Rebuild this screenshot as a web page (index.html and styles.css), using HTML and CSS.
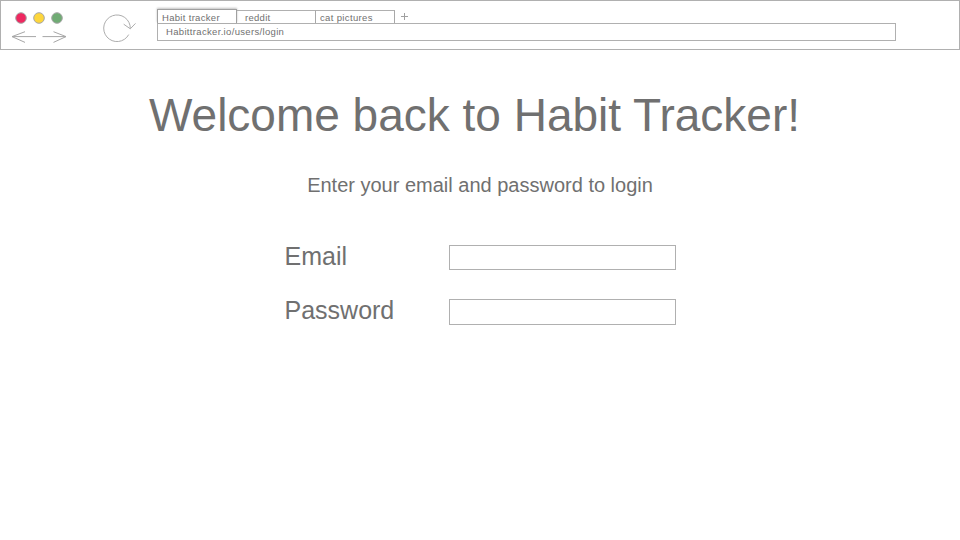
FILE: index.html
```html
<!DOCTYPE html>
<html lang="en">
<head>
<meta charset="utf-8">
<title>Habit tracker</title>
<link rel="stylesheet" href="styles.css">
</head>
<body>
<header class="browser">
  <svg class="controls" width="156" height="48" viewBox="1 1 156 48" fill="none" stroke="#a6a6a6" stroke-width="1">
    <circle cx="21" cy="18" r="5.3" fill="#ee2860"/>
    <circle cx="39" cy="18" r="5.3" fill="#fdd63c"/>
    <circle cx="57" cy="18" r="5.3" fill="#70ab74"/>
    <path d="M36 36.6H12M25 31.7L12 36.6L25 42.4M42.5 36.6H66M53.5 31.7L66 36.6L53.5 42.4"/>
    <path d="M130.3 28.6A13.3 13.3 0 1 0 128.7 34.6M123.7 24.2L130.3 28.8L135.5 23.4" stroke="#adadad"/>
  </svg>
  <div class="main">
    <nav class="tabs">
      <span class="tab active"><span class="t1">Habit tracker</span></span>
      <span class="tab"><span class="t2">reddit</span></span>
      <span class="tab last"><span class="t3">cat pictures</span></span>
      <svg class="plus" width="7" height="7" viewBox="0 0 7 7" stroke="#a0a0a0"><path d="M0 3.5H7M3.5 0V7"/></svg>
    </nav>
    <div class="address"><span class="url">Habittracker.io/users/login</span></div>
  </div>
</header>
<main class="page">
  <h1 class="title">Welcome back to Habit Tracker!</h1>
  <p class="subtitle">Enter your email and password to login</p>
  <form class="form">
    <label class="label email" for="email">Email</label>
    <input class="field" id="email" type="email">
    <label class="label password" for="password">Password</label>
    <input class="field tall" id="password" type="password">
  </form>
</main>
</body>
</html>
```
FILE: styles.css
```css
* { box-sizing: border-box; }
body {
  margin: 0;
  background: #fff;
  color: #707070;
  font-family: "Liberation Sans", Arial, sans-serif;
}
.browser {
  display: flex;
  height: 50px;
  border: 1px solid #b0b0b0;
}
.controls { flex: none; }
.main { width: 739px; padding-top: 8px; }
.tabs {
  display: flex;
  align-items: flex-end;
  height: 14px;
}
.tab {
  width: 79px;
  height: 13px;
  border-top: 1px solid #b0b0b0;
  border-right: 1px solid #a8a8a8;
  padding-left: 8px;
  font-size: 9.5px;
  line-height: 13px;
  white-space: nowrap;
}
.tab.active {
  width: 80px;
  height: 14px;
  border: 1px solid #a0a0a0;
  border-bottom: 0;
  padding-left: 4px;
  line-height: 15px;
  box-shadow: 0 -1px 2px rgba(0, 0, 0, .25);
}
.tab.last { padding-left: 4px; }
.t1 { letter-spacing: .31px; }
.t2 { letter-spacing: .28px; }
.t3 { letter-spacing: .35px; }
.plus { margin: 0 0 3px 6px; }
.address {
  height: 18px;
  border: 1px solid #b0b0b0;
  padding-left: 8px;
  font-size: 9.5px;
  line-height: 16px;
}
.url { letter-spacing: .33px; }
.page {
  display: flex;
  flex-direction: column;
  align-items: center;
}
.title {
  margin: 38px 0 0;
  padding-right: 11px;
  font-size: 46px;
  line-height: 54px;
  font-weight: 400;
  white-space: nowrap;
}
.subtitle {
  margin: 31px 0 0;
  font-size: 20px;
  line-height: 24px;
  white-space: nowrap;
}
.form {
  display: grid;
  grid-template-columns: 164px 227px;
  row-gap: 29px;
  margin-top: 48px;
}
.label {
  font-size: 25px;
  line-height: 22px;
  height: 25px;
}
.field {
  width: 227px;
  height: 25px;
  margin: 0;
  padding: 2px 6px;
  border: 1px solid #b0b0b0;
  border-radius: 0;
  background: #fff;
  font: 16px "Liberation Sans", sans-serif;
}
.field.tall { height: 26px; }
```
